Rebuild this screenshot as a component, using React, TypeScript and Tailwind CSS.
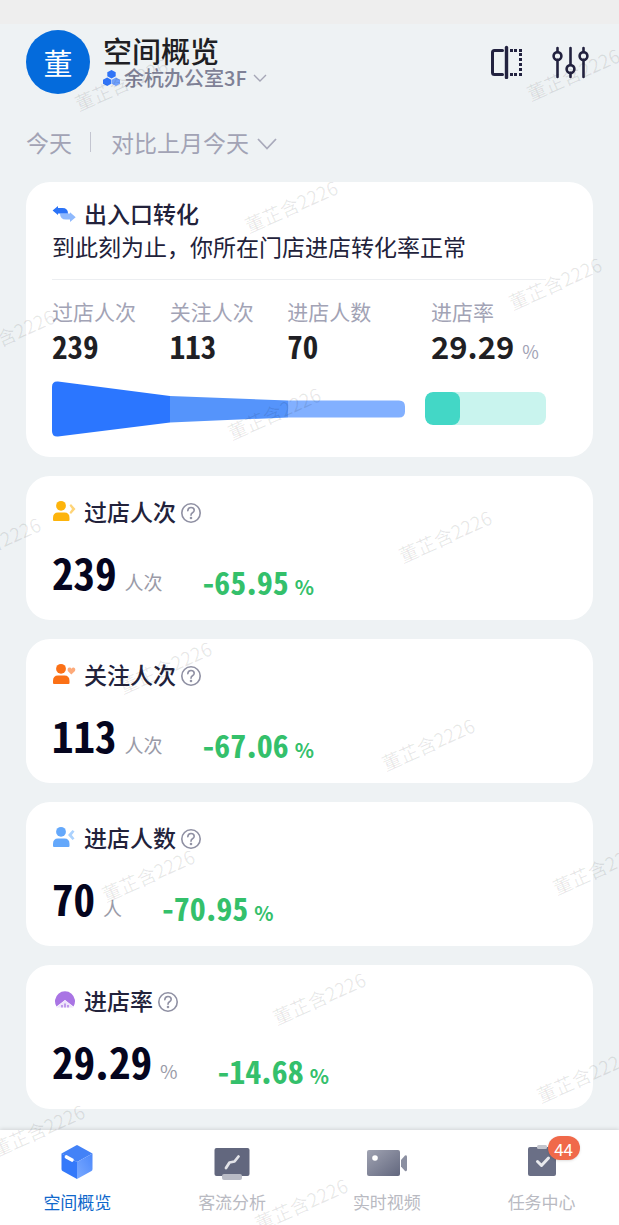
import type { ReactNode } from "react";

type Metric = {
  label: string;
  value: string;
  unit: string;
  delta: string;
  icon: ReactNode;
};

const metrics: Metric[] = [
  { label: "过店人次", value: "239", unit: "人次", delta: "-65.95", icon: <PersonIcon kind="pass" /> },
  { label: "关注人次", value: "113", unit: "人次", delta: "-67.06", icon: <PersonIcon kind="focus" /> },
  { label: "进店人数", value: "70", unit: "人", delta: "-70.95", icon: <PersonIcon kind="enter" /> },
  { label: "进店率", value: "29.29", unit: "%", delta: "-14.68", icon: <RateIcon /> },
];

const funnel = [
  { label: "过店人次", value: "239" },
  { label: "关注人次", value: "113" },
  { label: "进店人数", value: "70" },
];

const tabs = [
  { label: "空间概览", icon: <CubeIcon />, active: true },
  { label: "客流分析", icon: <BoardIcon /> },
  { label: "实时视频", icon: <CameraIcon /> },
  { label: "任务中心", icon: <TaskIcon />, badge: 44 },
];

// centre points of the repeated user stamp
const stamps = [
  [121, 84], [573, 74], [291, 206], [555, 283], [8, 335], [274, 413], [-6, 543], [445, 536],
  [165, 667], [428, 744], [148, 875], [599, 868], [319, 998], [583, 1076], [38, 1130], [301, 1204],
];

export default function App() {
  return (
    <div className="relative flex min-h-screen flex-col overflow-hidden bg-[#eef2f4] font-['Noto_Sans_CJK_SC',sans-serif] text-[#22223b]">
      <div className="h-6 bg-[#eeeeee]" />
      <Header />
      <Filters />
      <main className="flex flex-1 flex-col gap-[19px] px-[26px] pb-5">
        <Conversion />
        {metrics.map((m) => (
          <MetricCard key={m.label} {...m} />
        ))}
      </main>
      <TabBar />
      <Watermark />
    </div>
  );
}

// narrow digits, with the sign and the point kept at their own width
function Num({ children }: { children: string }) {
  return (
    <span className="font-['Noto_Sans_Mono_CJK_SC','Noto_Sans_CJK_SC',monospace] font-bold">
      {children.split(/([-.])/).map((part, i) =>
        i % 2 ? (
          <span key={i} className="font-['Noto_Sans_CJK_SC',sans-serif]">{part}</span>
        ) : (
          part
        ),
      )}
    </span>
  );
}

function Header() {
  return (
    <header className="flex h-[76px] items-center px-[26px]">
      <div className="flex size-16 items-center justify-center rounded-full bg-[#046bdc] text-[29px] leading-none text-white">
        董
      </div>
      <div className="ml-[13px] flex-1">
        <h1 className="text-[29px] leading-8 font-medium text-[#1f1f24]">空间概览</h1>
        <button type="button" className="flex h-6 items-center text-xl leading-6 font-medium text-[#7f8196]">
          <SpaceIcon />
          <span className="ml-1">余杭办公室3F</span>
          <svg viewBox="0 0 14 8" className="ml-1.5 h-2 w-3.5" fill="none" stroke="#a5a6b6" strokeWidth="1.4">
            <path d="M1 1 7 7 13 1" />
          </svg>
        </button>
      </div>
      <button type="button" aria-label="对比" className="mr-[27px]">
        <CompareIcon />
      </button>
      <button type="button" aria-label="筛选" className="mr-1">
        <SlidersIcon />
      </button>
    </header>
  );
}

function Filters() {
  return (
    <div className="flex h-[82px] items-center px-[26px] pt-0.5 text-[23px] leading-8 text-[#a2a3b5]">
      <button type="button">今天</button>
      <span className="mr-5 ml-[18px] h-5 w-px bg-[#c3c5d0]" />
      <button type="button" className="flex items-center">
        对比上月今天
        <svg viewBox="0 0 20 12" className="mt-1 ml-2 h-3 w-5" fill="none" stroke="#a9aabb" strokeWidth="1.8">
          <path d="M1 1 10 10.5 19 1" />
        </svg>
      </button>
    </div>
  );
}

function Conversion() {
  return (
    <section className="h-[275px] rounded-3xl bg-white pt-[15px] pr-[47px] pl-[26px]">
      <h2 className="flex items-center gap-2 text-[23px] leading-8 font-medium">
        <SwapIcon />
        出入口转化
      </h2>
      <p className="text-[23px] leading-[34px] whitespace-nowrap">到此刻为止，你所在门店进店转化率正常</p>
      <hr className="mt-4 border-[#eceef1]" />
      <div className="mt-[15px] flex gap-5">
        <div className="min-w-0 flex-[353]">
          <dl className="grid grid-cols-3">
            {funnel.map((f) => (
              <div key={f.label}>
                <dt className="text-[21px] leading-8 text-[#a2a3b5]">{f.label}</dt>
                <dd className="text-[31px] leading-[38px] text-[#1f1f24]">
                  <Num>{f.value}</Num>
                </dd>
              </div>
            ))}
          </dl>
          <svg viewBox="0 0 353 56" className="mt-4 block w-full">
            <path d="M6 0.5 118 15V41.500L6 55.500Q0 56 0 50V6Q0 0 6 0.500Z" fill="#2b76ff" />
            <path d="M118 15 236 19.500V36.500L118 41.500Z" fill="#5594fb" />
            <path d="M236 19.500H347Q353 19.500 353 25.500V30.500Q353 36.500 347 36.500H236Z" fill="#82b0ff" />
          </svg>
        </div>
        <div className="min-w-0 flex-[121]">
          <dl className="pl-1.5">
            <dt className="text-[21px] leading-8 text-[#a2a3b5]">进店率</dt>
            <dd className="flex items-baseline gap-2 text-[#1f1f24]">
              <span className="text-[31px] leading-[38px] font-bold">29.29</span>
              <span className="text-lg leading-6 text-[#a2a3b5]">%</span>
            </dd>
          </dl>
          <div className="mt-[27px] h-[33px] overflow-hidden rounded-lg bg-[#c9f4ee]">
            <div className="h-full rounded-lg bg-[#43d7c6]" style={{ width: "29.29%" }} />
          </div>
        </div>
      </div>
    </section>
  );
}

function MetricCard({ label, value, unit, delta, icon }: Metric) {
  return (
    <section className="h-36 rounded-3xl bg-white px-[26px] pt-[19px]">
      <div className="flex items-center">
        {icon}
        <h2 className="ml-2 text-[23px] leading-8 font-medium">{label}</h2>
        <button type="button" aria-label={`${label}说明`} className="mt-1 ml-1">
          <HelpIcon />
        </button>
      </div>
      <div className="mt-[18px] flex items-end">
        <div className="flex items-baseline gap-2">
          <span className="text-[43px] leading-[52px] text-[#05051e]">
            <Num>{value}</Num>
          </span>
          <span className="text-[19px] leading-6 text-[#9a9ba8]">{unit}</span>
        </div>
        <div className="ml-10 flex items-end gap-1.5 text-[#34c06b]">
          <span className="text-[32px] leading-8">
            <Num>{delta}</Num>
          </span>
          <span className="text-xl leading-5 font-bold">%</span>
        </div>
      </div>
    </section>
  );
}

function TabBar() {
  return (
    <nav className="grid h-[95px] grid-cols-4 bg-white shadow-[0_-1px_4px_rgba(0,0,0,0.12)]">
      {tabs.map((tab) => (
        <a
          key={tab.label}
          href="#"
          className={`flex flex-col items-center pt-3.5 text-[17px] leading-6 ${tab.active ? "text-[#1068cb]" : "text-[#b9bac2]"}`}
        >
          <span className="relative">
            {tab.icon}
            {tab.badge && (
              <span className="absolute -top-2 left-6 flex h-6 w-8 items-center justify-center rounded-full bg-[#f0694a] text-[17px] leading-none text-white shadow-sm">
                {tab.badge}
              </span>
            )}
          </span>
          <span className="mt-2.5">{tab.label}</span>
        </a>
      ))}
    </nav>
  );
}

function Watermark() {
  return (
    <div aria-hidden="true" className="pointer-events-none absolute inset-0 overflow-hidden select-none">
      {stamps.map(([x, y]) => (
        <span
          key={`${x},${y}`}
          className="absolute -translate-x-1/2 -translate-y-1/2 -rotate-24 text-[19px] leading-6 whitespace-nowrap text-black/9"
          style={{ left: x, top: y }}
        >
          董芷含2226
        </span>
      ))}
    </div>
  );
}

function HelpIcon() {
  return (
    <svg viewBox="0 0 22 22" className="size-[22px]" fill="none" stroke="#8f90a3" strokeWidth="1.600" strokeLinecap="round" strokeLinejoin="round">
      <circle cx="11" cy="11" r="9.200" />
      <path d="M7.800 8.800Q8 5.500 11 5.500 14.200 5.500 14.200 8.300 14.200 9.800 12.500 10.800 11 11.700 11 13.200" />
      <circle cx="11" cy="16" r="0.500" fill="#8f90a3" />
    </svg>
  );
}

function SpaceIcon() {
  return (
    <svg viewBox="0 0 17 16" className="h-4 w-[17px]">
      <path d="M8.500 0 12.700 2.200V6.200L8.500 8.400 4.300 6.200V2.200Z" fill="#2f73f6" />
      <path d="M4.200 7.500 8.300 9.700V13.700L4.200 15.900 0 13.700V9.700Z" fill="#2f73f6" />
      <path d="M12.900 7.500 17 9.700V13.700L12.900 15.900 8.800 13.700V9.700Z" fill="#70a0fc" />
    </svg>
  );
}

function CompareIcon() {
  const dots = [
    [20, 4], [24, 4], [29, 4], [29, 8], [29, 13], [29, 18], [29, 23], [29, 28], [24, 28], [20, 28],
  ];
  return (
    <svg viewBox="0 0 34 34" className="size-[34px]" fill="none" stroke="#22223f" strokeLinecap="round">
      <path d="M12.500 5.500H4.500Q2.500 5.500 2.500 7.500V27.500Q2.500 29.500 4.500 29.500H12.500" strokeWidth="3" />
      <path d="M16.500 2.500V32.500" strokeWidth="3.400" />
      {dots.map(([x, y]) => (
        <rect key={`${x}-${y}`} x={x} y={y} width="3" height="3" fill="#22223f" stroke="none" />
      ))}
    </svg>
  );
}

function SlidersIcon() {
  return (
    <svg viewBox="0 0 38 34" className="h-[34px] w-[38px]" fill="none" stroke="#22223f" strokeWidth="2.600" strokeLinecap="round">
      <path d="M6.500 3V7M6.500 15V32M19.500 3V19M19.500 28V32M32.500 3V7M32.500 15V32" />
      <circle cx="6.500" cy="11" r="3.900" />
      <circle cx="19.500" cy="24" r="3.900" />
      <circle cx="32.500" cy="11" r="3.900" />
    </svg>
  );
}

function SwapIcon() {
  return (
    <svg viewBox="0 0 24 24" className="size-6">
      <path d="M8 12.500H18V11.200L23.700 16.200 18 21V18.500H14Q8 18.500 8 12.500Z" fill="#8fb9fd" />
      <path d="M0.600 9.500 6 5V7H10.500Q16 7 16 12.500H6V14Z" fill="#2b73f7" />
    </svg>
  );
}

function PersonIcon({ kind }: { kind: "pass" | "focus" | "enter" }) {
  const color = { pass: "#fdb40c", focus: "#fb7016", enter: "#64a8fb" }[kind];
  return (
    <svg viewBox="0 0 24 24" className="size-6" fill={color}>
      <circle cx="9" cy="6.800" r="4.900" />
      <path d="M1 21V19Q1 13.500 6 13.500H12.500Q17.500 13.500 17.500 19V21Q17.500 22 16.500 22H2Q1 22 1 21Z" />
      {kind === "pass" && (
        <path d="M17.500 6.500 19 5 23.500 10 19 15 17.500 13.500 20 10Z" fill="#fed478" />
      )}
      {kind === "focus" && (
        <path d="M19.300 12.500 15.800 9Q15 6 17.500 5.600 19 5.500 19.500 6.800 20.200 5.500 21.600 5.600 24 6.200 23 9Z" fill="#fdaa7a" />
      )}
      {kind === "enter" && (
        <path d="M22.500 6.500 20.500 5 16 10 20.500 15 22.500 13.500 19.800 10Z" fill="#abd2fe" />
      )}
    </svg>
  );
}

function RateIcon() {
  return (
    <svg viewBox="0 0 24 24" className="size-6">
      <path d="M4.500 18.500A10 10 0 1 1 21.500 18.500L13 12Z" fill="#a974e4" />
      <path d="M4.500 19.500 13 12 21.500 19.500Z" fill="#eee4fb" />
      <path d="M10 17V19.500M13 15.500V19.500M16 17V19.500" stroke="#a974e4" strokeWidth="1.300" />
    </svg>
  );
}

function CubeIcon() {
  return (
    <svg viewBox="0 0 36 36" className="size-9">
      <defs>
        <linearGradient id="cubeSide" x1="0" y1="1" x2="1" y2="0">
          <stop offset="0" stopColor="#7baaff" />
          <stop offset="1" stopColor="#4c88fb" />
        </linearGradient>
      </defs>
      <path d="M17 1.500Q18 0.500 19 1.500L33.500 9.500 18 18 2.500 9.500Z" fill="#4382f7" />
      <path d="M2.500 9.500 18 18V35L3.500 27Q2.500 26.500 2.500 25Z" fill="#3479fa" />
      <path d="M33.500 9.500 18 18V35L32.500 27Q33.500 26.500 33.500 25Z" fill="url(#cubeSide)" />
      <path d="M7.500 13 13 16" stroke="#fff" strokeWidth="3.600" strokeLinecap="round" />
    </svg>
  );
}

function BoardIcon() {
  return (
    <svg viewBox="0 0 36 36" className="size-9">
      <rect x="0.500" y="4" width="35" height="28" rx="2" fill="#62677e" />
      <path d="M12 24 15.500 18.500 20.500 17.500 24.500 12.500" fill="none" stroke="#e2e3e8" strokeWidth="2.800" strokeLinecap="round" strokeLinejoin="round" />
      <rect x="8" y="30" width="20" height="6" rx="2" fill="#b9bbc5" />
    </svg>
  );
}

function CameraIcon() {
  return (
    <svg viewBox="0 0 42 36" className="h-9 w-[42px]">
      <defs>
        <linearGradient id="cameraBody" x1="0" y1="0" x2="1" y2="1">
          <stop offset="0" stopColor="#a0a3b2" />
          <stop offset="1" stopColor="#62677e" />
        </linearGradient>
      </defs>
      <path d="M35 16 39 11.500Q41 10.500 41 13V25.500Q41 28 39 27L35 22.500Z" fill="#8b8fa1" />
      <rect x="1" y="6" width="33" height="26" rx="2" fill="url(#cameraBody)" />
      <circle cx="9" cy="14" r="2.800" fill="#fff" />
    </svg>
  );
}

function TaskIcon() {
  return (
    <svg viewBox="0 0 36 36" className="size-9">
      <rect x="4" y="3" width="28" height="29" rx="2" fill="#6a6f86" />
      <rect x="13" y="1" width="10" height="4" rx="1.500" fill="#c3c5cd" />
      <path d="M13.500 17.500 17.500 21.500 24.500 14" fill="none" stroke="#e8e9ed" strokeWidth="3" strokeLinecap="round" strokeLinejoin="round" />
    </svg>
  );
}
